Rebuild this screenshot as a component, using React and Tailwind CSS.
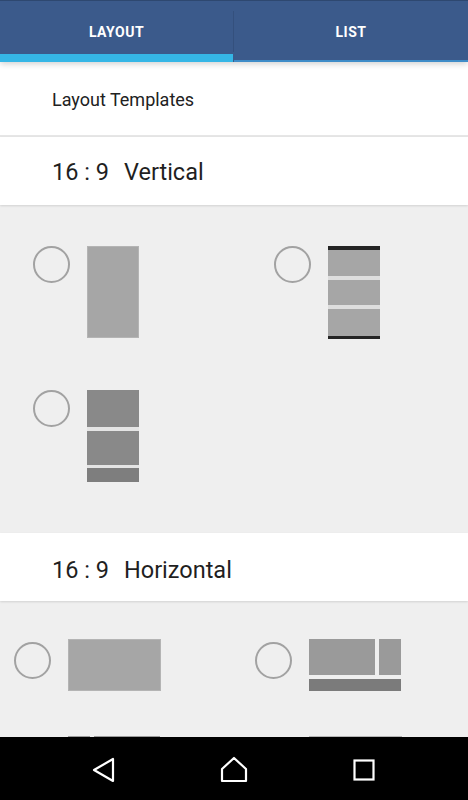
import React from 'react';

// Radio + thumbnail for a layout template
const Radio = ({ className = '' }) => (
  <div className={`w-[37px] h-[37px] rounded-full border-2 border-[#a2a2a2] shrink-0 ${className}`} />
);

const VerticalSingle = () => (
  <div className="w-[52px] h-[92px] bg-[#a6a6a6] border border-[#b4b4b4]" />
);

const VerticalTriple = () => (
  <div className="w-[52px] h-[93px] flex flex-col">
    <div className="h-[4px] bg-[#242424]" />
    <div className="h-[26px] bg-[#a6a6a6]" />
    <div className="h-[4px] bg-[#dedede]" />
    <div className="h-[25px] bg-[#a6a6a6]" />
    <div className="h-[4px] bg-[#dedede]" />
    <div className="h-[27px] bg-[#a6a6a6]" />
    <div className="h-[3px] bg-[#242424]" />
  </div>
);

const VerticalStack = () => (
  <div className="w-[52px] h-[92px] flex flex-col">
    <div className="h-[37px] bg-[#898989]" />
    <div className="h-[4px] bg-[#e4e4e4]" />
    <div className="h-[34px] bg-[#898989]" />
    <div className="h-[3px] bg-[#e4e4e4]" />
    <div className="h-[14px] bg-[#7e7e7e]" />
  </div>
);

const HorizontalSingle = () => (
  <div className="w-[93px] h-[52px] bg-[#a6a6a6] border border-[#b4b4b4]" />
);

const HorizontalSplit = () => (
  <div className="w-[92px] h-[52px] flex flex-col gap-[4px]">
    <div className="h-[36px] flex gap-[4px]">
      <div className="w-[66px] bg-[#9a9a9a]" />
      <div className="flex-1 bg-[#9a9a9a]" />
    </div>
    <div className="flex-1 bg-[#7b7b7b]" />
  </div>
);

const HorizontalSide = () => (
  <div className="w-[92px] h-[52px] flex gap-[4px]">
    <div className="w-[22px] bg-[#9a9a9a]" />
    <div className="flex-1 bg-[#9a9a9a]" />
  </div>
);

const SectionHeader = ({ children, extra = '' }) => (
  <div className={`h-[68px] shrink-0 bg-white flex items-center pl-[52px] text-[23.5px] text-[#1f1f1f] relative z-[1] shadow-[0_1px_2px_rgba(0,0,0,0.12)] ${extra}`}>
    {children}
  </div>
);

export default function App() {
  return (
    <div className="w-[468px] h-[800px] flex flex-col overflow-hidden bg-[#efefef] font-['Roboto','Liberation_Sans',sans-serif]">
      {/* tabs */}
      <div className="h-[62px] flex bg-[#3b5a8b] border-t border-[#2e4870] relative z-10 shadow-[0_2px_6px_rgba(0,0,0,0.18)] shrink-0">
        <div className="w-[233px] relative flex items-center justify-center pt-[2px] text-white text-[14px] font-bold tracking-[0.5px]">
          LAYOUT
          <div className="absolute left-0 right-0 bottom-0 h-[8px] bg-[#35b6e6]" />
        </div>
        <div className="w-px bg-[#34507d] my-[10px]" />
        <div className="flex-1 relative flex items-center justify-center pt-[2px] text-white text-[14px] font-bold tracking-[0.5px]">
          LIST
          <div className="absolute left-0 right-0 bottom-0 h-[2px] bg-[#3f8cc8]" />
        </div>
      </div>

      <div className="flex-1 overflow-hidden flex flex-col">
        <div className="h-[73px] bg-white flex items-center pl-[52px] pt-[2px] text-[18px] text-[#212121] shrink-0">
          Layout Templates
        </div>
        <div className="h-[2px] bg-[#e6e6e6] shrink-0" />

        <SectionHeader extra="pt-[4px]">
          <span>16 : 9</span>
          <span className="ml-[15px]">Vertical</span>
        </SectionHeader>
        <div className="h-[328px] shrink-0 pt-[41px] pl-[33px] grid grid-cols-[241px_1fr] gap-y-[51px] content-start">
          <div className="flex gap-[17px]">
            <Radio />
            <VerticalSingle />
          </div>
          <div className="flex gap-[17px]">
            <Radio />
            <VerticalTriple />
          </div>
          <div className="flex gap-[17px]">
            <Radio />
            <VerticalStack />
          </div>
        </div>

        <SectionHeader extra="pt-[8px]">
          <span>16 : 9</span>
          <span className="ml-[15px]">Horizontal</span>
        </SectionHeader>
        <div className="shrink-0 pt-[38px] pl-[14px] grid grid-cols-[241px_1fr] gap-y-[45px] content-start">
          <div className="flex gap-[17px]">
            <Radio className="mt-[3px]" />
            <HorizontalSingle />
          </div>
          <div className="flex gap-[17px]">
            <Radio className="mt-[3px]" />
            <HorizontalSplit />
          </div>
          <div className="flex gap-[17px]">
            <Radio className="mt-[3px]" />
            <HorizontalSide />
          </div>
          <div className="flex gap-[17px]">
            <Radio className="mt-[3px]" />
            <HorizontalSingle />
          </div>
        </div>
      </div>

      {/* android nav bar */}
      <div className="h-[63px] bg-black flex justify-center items-center shrink-0 pt-[2px]">
        <div className="w-[130px] flex justify-center">
          <svg width="24" height="26" viewBox="0 0 24 26" fill="none" stroke="white" strokeWidth="2.2" strokeLinejoin="round">
            <path d="M21 2 V24 L2 13 Z" />
          </svg>
        </div>
        <div className="w-[130px] flex justify-center">
          <svg width="28" height="27" viewBox="0 0 28 27" fill="none" stroke="white" strokeWidth="2.2" strokeLinejoin="round">
            <path d="M2 25 V13 L14 2 L26 13 V25 Z" />
          </svg>
        </div>
        <div className="w-[130px] flex justify-center">
          <svg width="22" height="22" viewBox="0 0 22 22" fill="none" stroke="white" strokeWidth="2.2">
            <rect x="1.5" y="1.5" width="19" height="19" />
          </svg>
        </div>
      </div>
    </div>
  );
}
